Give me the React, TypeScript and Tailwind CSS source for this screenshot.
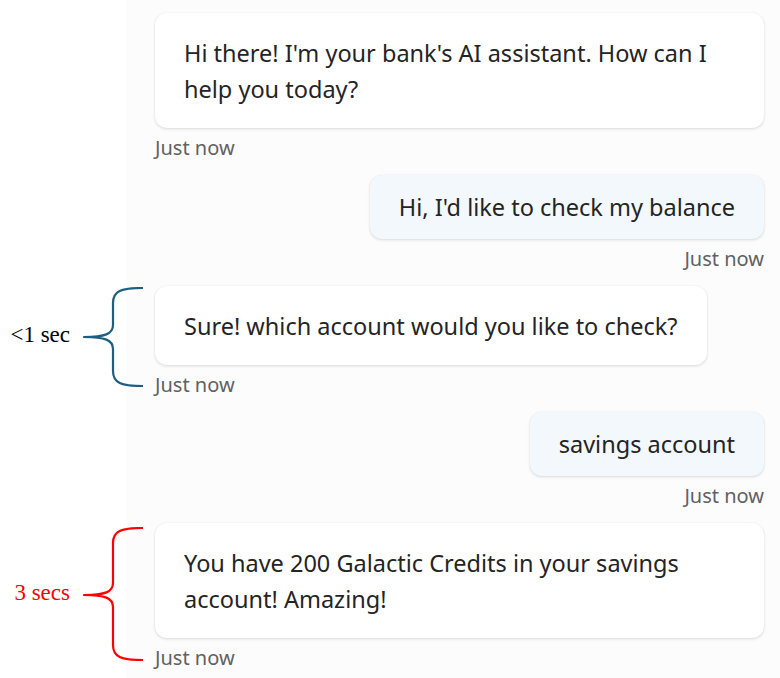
type Note = {
  label: string;
  labelColor: string;
  color: string;
  height: number;
  tip: number;
  offset: number;
};

type Msg = {
  from: "bot" | "user";
  text: string;
  note?: Note;
};

const messages: Msg[] = [
  { from: "bot", text: "Hi there! I'm your bank's AI assistant. How can I help you today?" },
  { from: "user", text: "Hi, I'd like to check my balance" },
  {
    from: "bot",
    text: "Sure! which account would you like to check?",
    note: { label: "<1 sec", labelColor: "#000000", color: "#1d5f80", height: 100, tip: 50, offset: 1 },
  },
  { from: "user", text: "savings account" },
  {
    from: "bot",
    text: "You have 200 Galactic Credits in your savings account! Amazing!",
    note: { label: "3 secs", labelColor: "#ff0000", color: "#ff0000", height: 134, tip: 68, offset: 4 },
  },
];

// Curly brace spanning a bot reply and its timestamp, with the response time beside it.
function Brace({ note }: { note: Note }) {
  const h = note.height;
  const m = note.tip;
  const d = `M60 1 C38 1 30 4 30 16 L30 ${m - 12} C30 ${m - 3} 22 ${m} 1 ${m} C22 ${m} 30 ${m + 3} 30 ${m + 12} L30 ${h - 16} C30 ${h - 4} 38 ${h - 1} 60 ${h - 1}`;
  return (
    <div
      className="pointer-events-none absolute left-[-155px] flex items-start"
      style={{ top: note.offset }}
    >
      <div
        className="w-[70px] whitespace-nowrap text-right text-[23px] leading-[26px] font-['Liberation_Serif',serif]"
        style={{ color: note.labelColor, marginTop: m - 15 }}
      >
        {note.label}
      </div>
      <svg width="62" height={h} viewBox={`0 0 62 ${h}`} className="ml-[13px]">
        <path d={d} fill="none" stroke={note.color} strokeWidth="2.2" strokeLinejoin="round" />
      </svg>
    </div>
  );
}

function Message({ msg }: { msg: Msg }) {
  const bot = msg.from === "bot";
  return (
    <div className={`relative flex flex-col ${bot ? "items-start" : "items-end"}`}>
      {msg.note && <Brace note={msg.note} />}
      <div
        className={
          bot
            ? "rounded-[12px] bg-white px-[29px] py-[21.5px] text-[23.5px] leading-[36px] text-[#242424] shadow-[0_1px_3px_rgba(0,0,0,0.14),0_0_1px_rgba(0,0,0,0.06)]"
            : "rounded-[12px] bg-[#f2f8fc] px-[29px] py-[14px] text-[23.5px] leading-[36px] text-[#242424] shadow-[0_1px_3px_rgba(0,0,0,0.14),0_0_1px_rgba(0,0,0,0.06)]"
        }
      >
        {msg.text}
      </div>
      <div className="mt-[8px] text-[20px] leading-[24px] text-[#616161]">Just now</div>
    </div>
  );
}

export default function App() {
  return (
    <div className="flex min-h-[678px] w-[780px] bg-white font-['Noto_Sans',sans-serif]">
      <div className="w-[126px] shrink-0 bg-white" />
      <div className="flex flex-1 flex-col gap-[15px] bg-[#fcfcfd] pl-[29px] pr-[16px] pt-[13px]">
        {messages.map((m, i) => (
          <Message key={i} msg={m} />
        ))}
      </div>
    </div>
  );
}
